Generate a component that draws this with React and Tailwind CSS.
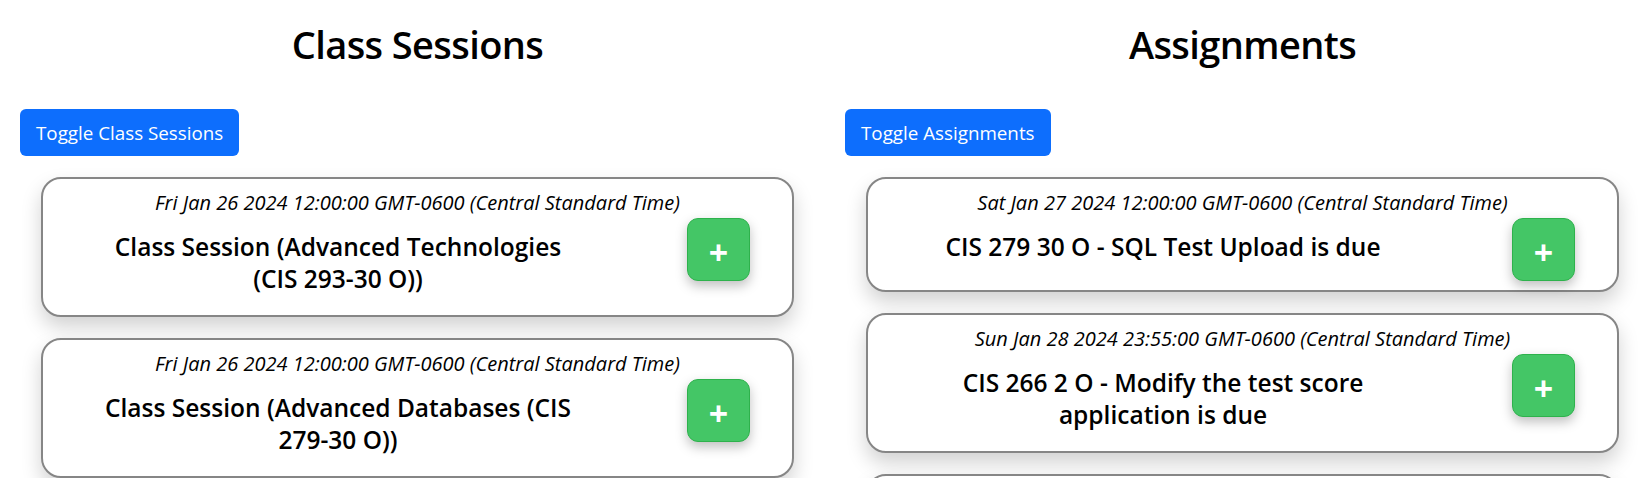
import React, { useState } from 'react';

const classSessions = [
  {
    id: 1,
    date: 'Fri Jan 26 2024 12:00:00 GMT-0600 (Central Standard Time)',
    title: 'Class Session (Advanced Technologies (CIS 293-30 O))',
  },
  {
    id: 2,
    date: 'Fri Jan 26 2024 12:00:00 GMT-0600 (Central Standard Time)',
    title: 'Class Session (Advanced Databases (CIS 279-30 O))',
  },
  {
    id: 3,
    date: 'Fri Feb 02 2024 12:00:00 GMT-0600 (Central Standard Time)',
    title: 'Class Session (Advanced Technologies (CIS 293-30 O))',
  },
];

const assignments = [
  {
    id: 1,
    date: 'Sat Jan 27 2024 12:00:00 GMT-0600 (Central Standard Time)',
    title: 'CIS 279 30 O - SQL Test Upload is due',
  },
  {
    id: 2,
    date: 'Sun Jan 28 2024 23:55:00 GMT-0600 (Central Standard Time)',
    title: 'CIS 266 2 O - Modify the test score application is due',
  },
  {
    id: 3,
    date: 'Wed Jan 31 2024 23:55:00 GMT-0600 (Central Standard Time)',
    title: 'CIS 293 30 O - Week 4 Discussion is due',
  },
];

const EventCard = ({ item }) => (
  <div className="mx-[21px] rounded-[20px] border-2 border-[#868686] bg-white pt-[9px] pb-[9px] shadow-[0_10px_20px_rgba(0,0,0,0.18)]">
    <p className="text-center text-[20px] italic leading-[30px] text-black">{item.date}</p>
    <div className="flex items-start">
      <h5 className="mt-[13px] mb-[11px] ml-[55px] w-[480px] text-center text-[24.5px] font-semibold leading-[32px] text-black">
        {item.title}
      </h5>
      <button className="ml-auto mr-[42px] flex h-[63px] w-[63px] items-center justify-center rounded-[11px] border border-[#2eb24c] bg-[#44c666] pt-[4px] text-[34px] font-bold leading-none text-white shadow-[0_5px_12px_rgba(0,0,0,0.25)]">
        +
      </button>
    </div>
  </div>
);

const Column = ({ heading, toggleLabel, items }) => {
  const [open, setOpen] = useState(true);

  return (
    <div>
      <h2 className="text-center text-[38px] font-semibold leading-[48px] tracking-[-0.6px] text-black">{heading}</h2>
      <button
        onClick={() => setOpen(!open)}
        className="mt-[41px] h-[47px] rounded-[6px] bg-[#0d6efd] px-[16px] text-[18.8px] leading-[30px] text-white"
      >
        {toggleLabel}
      </button>
      {open && (
        <div className="mt-[21px] flex flex-col gap-[21px]">
          {items.map((item) => (
            <EventCard key={item.id} item={item} />
          ))}
        </div>
      )}
    </div>
  );
};

const App = () => {
  return (
    <div
      className="min-h-screen bg-white pt-[20px] pr-[6px] pb-10 pl-[20px]"
      style={{ fontFamily: '"Segoe UI", "Open Sans", sans-serif' }}
    >
      <div className="grid grid-cols-2 gap-[30px]">
        <Column heading="Class Sessions" toggleLabel="Toggle Class Sessions" items={classSessions} />
        <Column heading="Assignments" toggleLabel="Toggle Assignments" items={assignments} />
      </div>
    </div>
  );
};

export default App;
